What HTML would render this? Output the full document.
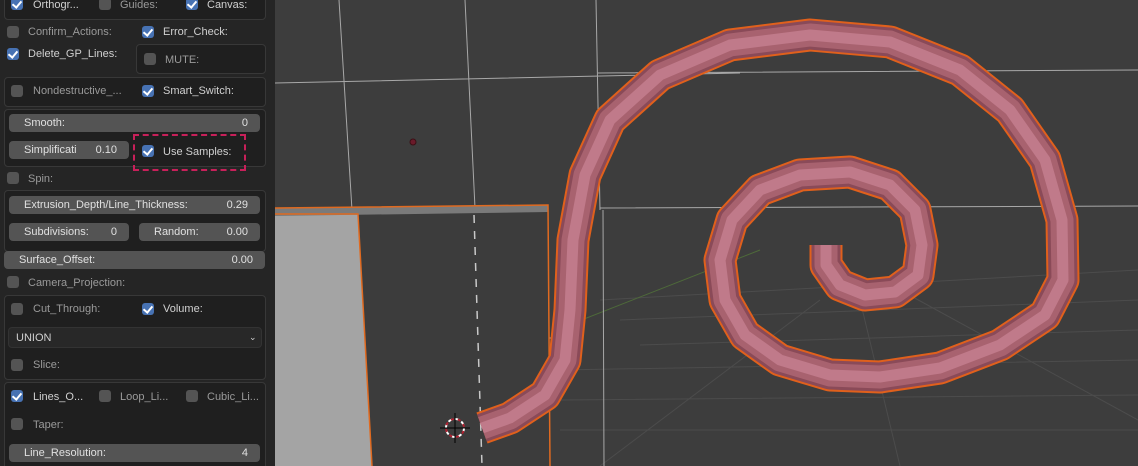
<!DOCTYPE html>
<html><head><style>
html,body{margin:0;width:1138px;height:466px;overflow:hidden}
body{background:#3d3d3d;font-family:"Liberation Sans","DejaVu Sans",sans-serif;font-size:11px;color:#d0d0d0;position:relative}
#p{position:absolute;left:0;top:0;width:275px;height:466px;background:#252525}
.b{position:absolute;background:#1f1f1f;border:1px solid #383838;border-radius:4px}
.cb{position:absolute;width:12px;height:12px;border-radius:3px;background:#545454}
.cb.on{background:#4772b3}
.cb.on:after{content:"";position:absolute;left:3px;top:1px;width:4px;height:7px;border:solid #fff;border-width:0 2px 2px 0;transform:rotate(40deg)}
.t{position:absolute;white-space:nowrap;line-height:13px;margin-top:1px}
.dim{color:#9a9a9a}
.s{position:absolute;height:18px;background:#545454;border-radius:4px;line-height:19px;color:#e0e0e0}
.s span{position:absolute;right:12px}
.s b{font-weight:normal;position:absolute;left:15px}
</style></head><body>
<svg style="position:absolute;left:0;top:0" width="1138" height="466">
<g stroke="#4c4c4c" stroke-width="1" fill="none">
<path d="M600 300 L1138 270 M620 320 L1138 300 M640 345 L1138 330 M560 370 L1138 360 M560 400 L1138 395 M560 430 L1138 430"/>
<path d="M820 300 L600 466 M860 300 L900 466 M900 290 L1138 420"/>
</g>
<path d="M556 330 L760 250" stroke="#4e6a3a" stroke-width="1"/>
<g stroke="#a8a8a8" stroke-width="1" fill="none">
<path d="M339 0 L352 210 M465 0 L475 208 M596 0 L600 210 M275 83 L740 73 M598 73 L1138 70 M600 208 L1138 206 M480 338 L560 338 M603 210 L604 466"/>
</g>
<polygon points="275,208 548,205 550,466 275,466" fill="#3c3c3c"/>
<polygon points="275,214 358,214 372,466 275,466" fill="#a4a4a4"/>
<polygon points="275,208 548,205 548,212 275,216" fill="#7a7a7a"/>
<path d="M275 214 L358 214 L372 466 M275 208 L548 205 L550 466" stroke="#e06a20" stroke-width="1.5" fill="none"/>
<path d="M474 215 L482 466" stroke="#c8c8c8" stroke-width="1.5" stroke-dasharray="8,8" fill="none"/>
<circle cx="413" cy="142" r="3" fill="#6a1a2a" stroke="#3a1015"/>
<g fill="none" stroke-linejoin="round" stroke-linecap="butt">
<path d="M826 245 L826 265 L840 285 L865 295 L895 292 L918 275 L922 245 L915 210 L890 185 L850 172 L800 175 L760 190 L732 220 L720 260 L725 300 L745 335 L780 360 L830 375 L880 377 L940 368 L1000 345 L1045 315 L1063 280 L1062 220 L1045 160 L1010 110 L960 70 L890 42 L810 35 L730 45 L660 75 L610 120 L585 175 L573 240 L570 310 L565 360 L545 395 L510 418 L482 428" stroke="#e0601c" stroke-width="33"/>
<path d="M826 245 L826 265 L840 285 L865 295 L895 292 L918 275 L922 245 L915 210 L890 185 L850 172 L800 175 L760 190 L732 220 L720 260 L725 300 L745 335 L780 360 L830 375 L880 377 L940 368 L1000 345 L1045 315 L1063 280 L1062 220 L1045 160 L1010 110 L960 70 L890 42 L810 35 L730 45 L660 75 L610 120 L585 175 L573 240 L570 310 L565 360 L545 395 L510 418 L482 428" stroke="#8a4a58" stroke-width="29"/>
<path d="M826 245 L826 265 L840 285 L865 295 L895 292 L918 275 L922 245 L915 210 L890 185 L850 172 L800 175 L760 190 L732 220 L720 260 L725 300 L745 335 L780 360 L830 375 L880 377 L940 368 L1000 345 L1045 315 L1063 280 L1062 220 L1045 160 L1010 110 L960 70 L890 42 L810 35 L730 45 L660 75 L610 120 L585 175 L573 240 L570 310 L565 360 L545 395 L510 418 L482 428" stroke="#a8626f" stroke-width="23"/>
<path d="M826 245 L826 265 L840 285 L865 295 L895 292 L918 275 L922 245 L915 210 L890 185 L850 172 L800 175 L760 190 L732 220 L720 260 L725 300 L745 335 L780 360 L830 375 L880 377 L940 368 L1000 345 L1045 315 L1063 280 L1062 220 L1045 160 L1010 110 L960 70 L890 42 L810 35 L730 45 L660 75 L610 120 L585 175 L573 240 L570 310 L565 360 L545 395 L510 418 L482 428" stroke="#c07a8a" stroke-width="11"/>
</g>
<circle cx="455" cy="428" r="9" fill="none" stroke="#fff" stroke-width="2" stroke-dasharray="4,3"/>
<circle cx="455" cy="428" r="9" fill="none" stroke="#b02030" stroke-width="2" stroke-dasharray="3,4" stroke-dashoffset="4"/>
<path d="M440 428 L470 428 M455 413 L455 443" stroke="#000" stroke-width="1"/>
</svg>
<div id="p">
<div class="b" style="left:4px;top:-6px;width:260px;height:24px"></div>
<div class="cb on" style="left:11px;top:-2px"></div><div class="t" style="left:33px;top:-2px">Orthogr...</div>
<div class="cb" style="left:99px;top:-2px"></div><div class="t dim" style="left:120px;top:-2px">Guides:</div>
<div class="cb on" style="left:186px;top:-2px"></div><div class="t" style="left:207px;top:-2px">Canvas:</div>
<div class="cb" style="left:7px;top:26px"></div><div class="t dim" style="left:28px;top:25px">Confirm_Actions:</div>
<div class="cb on" style="left:142px;top:26px"></div><div class="t" style="left:163px;top:25px">Error_Check:</div>
<div class="cb on" style="left:7px;top:48px"></div><div class="t" style="left:28px;top:47px">Delete_GP_Lines:</div>
<div class="b" style="left:136px;top:44px;width:128px;height:28px"></div>
<div class="cb" style="left:144px;top:53px"></div><div class="t dim" style="left:165px;top:53px">MUTE:</div>
<div class="b" style="left:4px;top:77px;width:260px;height:28px"></div>
<div class="cb" style="left:11px;top:85px"></div><div class="t dim" style="left:33px;top:84px">Nondestructive_...</div>
<div class="cb on" style="left:142px;top:85px"></div><div class="t" style="left:163px;top:84px">Smart_Switch:</div>
<div class="b" style="left:4px;top:109px;width:260px;height:56px"></div>
<div class="s" style="left:9px;top:114px;width:251px"><b>Smooth:</b><span>0</span></div>
<div class="s" style="left:9px;top:141px;width:120px"><b>Simplificati</b><span>0.10</span></div>
<div style="position:absolute;left:133px;top:134px;width:109px;height:33px;border:2px dashed #c8205a"></div>
<div class="cb on" style="left:142px;top:145px"></div><div class="t" style="left:163px;top:145px">Use Samples:</div>
<div class="cb" style="left:7px;top:172px"></div><div class="t dim" style="left:28px;top:172px">Spin:</div>
<div class="b" style="left:4px;top:190px;width:260px;height:60px"></div>
<div class="s" style="left:9px;top:196px;width:251px"><b>Extrusion_Depth/Line_Thickness:</b><span>0.29</span></div>
<div class="s" style="left:9px;top:223px;width:120px"><b>Subdivisions:</b><span>0</span></div>
<div class="s" style="left:139px;top:223px;width:121px"><b style="left:15px">Random:</b><span>0.00</span></div>
<div class="s" style="left:4px;top:251px;width:261px"><b>Surface_Offset:</b><span>0.00</span></div>
<div class="cb" style="left:7px;top:276px"></div><div class="t dim" style="left:28px;top:276px">Camera_Projection:</div>
<div class="b" style="left:4px;top:295px;width:260px;height:83px"></div>
<div class="cb" style="left:11px;top:303px"></div><div class="t dim" style="left:33px;top:302px">Cut_Through:</div>
<div class="cb on" style="left:142px;top:303px"></div><div class="t" style="left:163px;top:302px">Volume:</div>
<div style="position:absolute;left:8px;top:327px;width:252px;height:19px;background:#282828;border:1px solid #333;border-radius:4px"></div>
<div class="t" style="left:16px;top:331px">UNION</div><div class="t" style="left:249px;top:330px;font-size:9px">&#8964;</div>
<div class="cb" style="left:11px;top:359px"></div><div class="t dim" style="left:33px;top:358px">Slice:</div>
<div class="b" style="left:4px;top:382px;width:260px;height:90px"></div>
<div class="cb on" style="left:11px;top:390px"></div><div class="t" style="left:33px;top:390px">Lines_O...</div>
<div class="cb" style="left:99px;top:390px"></div><div class="t dim" style="left:120px;top:390px">Loop_Li...</div>
<div class="cb" style="left:186px;top:390px"></div><div class="t dim" style="left:207px;top:390px">Cubic_Li...</div>
<div class="cb" style="left:11px;top:418px"></div><div class="t dim" style="left:33px;top:418px">Taper:</div>
<div class="s" style="left:9px;top:444px;width:251px"><b>Line_Resolution:</b><span>4</span></div>
</div>
</body></html>
